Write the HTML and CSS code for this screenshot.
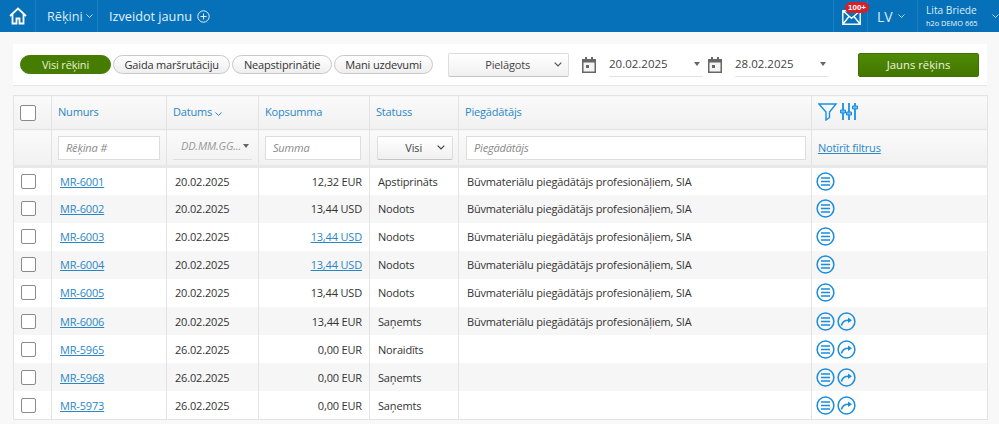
FILE: index.html
```html
<!DOCTYPE html>
<html lang="lv">
    <head>
        <meta charset="UTF-8">
        <title>Rēķini</title>
        <link rel="stylesheet" href="styles.css">
    </head>
    <body>
        <svg class="defs" width="0" height="0">
            <symbol id="i-list" viewBox="0 0 19 19">
                <circle cx="9.5" cy="9.5" r="8.4" fill="none" stroke="currentColor" stroke-width="1.5"/>
                <path d="M5 6h9M5 9.5h9M5 13h9" fill="none" stroke="currentColor" stroke-width="1.6"/>
            </symbol>
            <symbol id="i-fwd" viewBox="0 0 19 19">
                <circle cx="9.5" cy="9.5" r="8.4" fill="none" stroke="currentColor" stroke-width="1.5"/>
                <path d="M4.5 13.5c.6-3.2 3-5.300 7-5.300" fill="none" stroke="currentColor" stroke-width="1.5"/>
                <path d="M11 5.400l4 2.800-4 2.800z" fill="currentColor"/>
            </symbol>
            <symbol id="i-cal" viewBox="0 0 14 16">
                <path d="M3 0h2v2h4V0h2v2h3v14H0V2h3z" fill="#666"/>
                <path d="M1.500 5.500h11v9h-11z" fill="#f4f4f4"/>
                <path d="M4 8h3v3H4z" fill="#666"/>
            </symbol>
        </svg>

        <div class="topbar">
            <a class="home">
                <svg width="18" height="18" viewBox="0 0 18 18"><path d="M1 9l8-7.500L17 9M3.500 7.500V16.500h4v-5h3v5h4V7.500" fill="none" stroke="#fff" stroke-width="1.800"/></svg>
            </a>
            <a class="menu">Rēķini <svg class="chev" width="7" height="4" viewBox="0 0 7 4"><path d="M.5.500l3 3 3-3" fill="none" stroke="#bfdcf0"/></svg></a>
            <a class="create">Izveidot jaunu
                <svg width="13" height="13" viewBox="0 0 13 13"><circle cx="6.500" cy="6.500" r="5.700" fill="none" stroke="#e4f1fa"/><path d="M3.500 6.500h6M6.500 3.500v6" stroke="#e4f1fa"/></svg>
            </a>
            <div class="spacer"></div>
            <a class="mail">
                <svg width="19" height="15" viewBox="0 0 19 15"><path d="M.8.800h17.400v13.400H.8zM.8.800l8.700 7.500 8.700-7.500M.8 14.200l6-7.500M18.200 14.200l-6-7.500" fill="none" stroke="#fff" stroke-width="1.400"/></svg>
                <span class="badge">100+</span>
            </a>
            <a class="lang">LV <svg class="chev" width="7" height="4" viewBox="0 0 7 4"><path d="M.5.500l3 3 3-3" fill="none" stroke="#bfdcf0"/></svg></a>
            <a class="user">
                <span class="user-name">Lita Briede</span>
                <span class="user-org">h2o DEMO 665</span>
            </a>
            <svg class="chev user-chev" width="7" height="4" viewBox="0 0 7 4"><path d="M.5.500l3 3 3-3" fill="none" stroke="#bfdcf0"/></svg>
        </div>

        <div class="toolbar">
            <div class="pills">
                <button class="pill on">Visi rēķini</button>
                <button class="pill">Gaida maršrutāciju</button>
                <button class="pill">Neapstiprinātie</button>
                <button class="pill">Mani uzdevumi</button>
            </div>
            <div class="select period">Pielāgots <svg width="8" height="5" viewBox="0 0 8 5"><path d="M.7.700L4 4 7.300.7" fill="none" stroke="#555" stroke-width="1.200"/></svg></div>
            <svg class="cal" width="14" height="16"><use href="#i-cal"/></svg>
            <div class="date">20.02.2025<i class="caret"></i></div>
            <svg class="cal cal2" width="14" height="16"><use href="#i-cal"/></svg>
            <div class="date">28.02.2025<i class="caret"></i></div>
            <button class="new-btn">Jauns rēķins</button>
        </div>

        <table class="grid">
            <colgroup>
                <col class="c-check"><col class="c-num"><col class="c-date"><col class="c-sum"><col class="c-status"><col class="c-supplier"><col class="c-act">
            </colgroup>
            <thead>
                <tr class="head">
                    <th><span class="box big"></span></th>
                    <th>Numurs</th>
                    <th>Datums <svg width="7" height="4" viewBox="0 0 7 4"><path d="M.5.500l3 3 3-3" fill="none" stroke="#2b86c5"/></svg></th>
                    <th>Kopsumma</th>
                    <th>Statuss</th>
                    <th>Piegādātājs</th>
                    <th class="tools">
                        <svg class="tool-filter" width="20" height="18" viewBox="0 0 20 18"><path d="M1 1h17l-6.500 8v5.500L8 17V9z" fill="none" stroke="#1a8fe0" stroke-width="1.400"/></svg><svg width="18" height="17" viewBox="0 0 18 17"><path d="M3 0v17M9 0v17M15 0v17" stroke="#1a8fe0" stroke-width="1.800"/><path d="M.5 7h5v3h-5zM6.500 9h5v3h-5zM12.500 3h5v3h-5z" fill="#6db8ea" stroke="#1a8fe0"/></svg>
                    </th>
                </tr>
                <tr class="filters">
                    <th></th>
                    <th><input class="field" placeholder="Rēķina #"></th>
                    <th><div class="date-filter">DD.MM.GG...<i class="caret"></i></div></th>
                    <th><input class="field" placeholder="Summa"></th>
                    <th><div class="select status">Visi <svg width="8" height="5" viewBox="0 0 8 5"><path d="M.7.700L4 4 7.300.7" fill="none" stroke="#444" stroke-width="1.200"/></svg></div></th>
                    <th><input class="field" placeholder="Piegādātājs"></th>
                    <th><a class="link">Notīrīt filtrus</a></th>
                </tr>
            </thead>
            <tbody>
                <tr>
                    <td><span class="box"></span></td><td><a class="link">MR-6001</a></td><td>20.02.2025</td><td class="sum">12,32 EUR</td><td>Apstiprināts</td><td>Būvmateriālu piegādātājs profesionāļiem, SIA</td>
                    <td class="acts"><svg class="act"><use href="#i-list"/></svg></td>
                </tr>
                <tr>
                    <td><span class="box"></span></td><td><a class="link">MR-6002</a></td><td>20.02.2025</td><td class="sum">13,44 USD</td><td>Nodots</td><td>Būvmateriālu piegādātājs profesionāļiem, SIA</td>
                    <td class="acts"><svg class="act"><use href="#i-list"/></svg></td>
                </tr>
                <tr>
                    <td><span class="box"></span></td><td><a class="link">MR-6003</a></td><td>20.02.2025</td><td class="sum"><a class="link">13,44 USD</a></td><td>Nodots</td><td>Būvmateriālu piegādātājs profesionāļiem, SIA</td>
                    <td class="acts"><svg class="act"><use href="#i-list"/></svg></td>
                </tr>
                <tr>
                    <td><span class="box"></span></td><td><a class="link">MR-6004</a></td><td>20.02.2025</td><td class="sum"><a class="link">13,44 USD</a></td><td>Nodots</td><td>Būvmateriālu piegādātājs profesionāļiem, SIA</td>
                    <td class="acts"><svg class="act"><use href="#i-list"/></svg></td>
                </tr>
                <tr>
                    <td><span class="box"></span></td><td><a class="link">MR-6005</a></td><td>20.02.2025</td><td class="sum">13,44 USD</td><td>Nodots</td><td>Būvmateriālu piegādātājs profesionāļiem, SIA</td>
                    <td class="acts"><svg class="act"><use href="#i-list"/></svg></td>
                </tr>
                <tr>
                    <td><span class="box"></span></td><td><a class="link">MR-6006</a></td><td>20.02.2025</td><td class="sum">13,44 EUR</td><td>Saņemts</td><td>Būvmateriālu piegādātājs profesionāļiem, SIA</td>
                    <td class="acts"><svg class="act"><use href="#i-list"/></svg><svg class="act"><use href="#i-fwd"/></svg></td>
                </tr>
                <tr>
                    <td><span class="box"></span></td><td><a class="link">MR-5965</a></td><td>26.02.2025</td><td class="sum">0,00 EUR</td><td>Noraidīts</td><td></td>
                    <td class="acts"><svg class="act"><use href="#i-list"/></svg><svg class="act"><use href="#i-fwd"/></svg></td>
                </tr>
                <tr>
                    <td><span class="box"></span></td><td><a class="link">MR-5968</a></td><td>26.02.2025</td><td class="sum">0,00 EUR</td><td>Saņemts</td><td></td>
                    <td class="acts"><svg class="act"><use href="#i-list"/></svg><svg class="act"><use href="#i-fwd"/></svg></td>
                </tr>
                <tr>
                    <td><span class="box"></span></td><td><a class="link">MR-5973</a></td><td>26.02.2025</td><td class="sum">0,00 EUR</td><td>Saņemts</td><td></td>
                    <td class="acts"><svg class="act"><use href="#i-list"/></svg><svg class="act"><use href="#i-fwd"/></svg></td>
                </tr>
            </tbody>
        </table>
    </body>
</html>
```

FILE: styles.css
```css
* { box-sizing: border-box; }
html, body { margin: 0; padding: 0; }
body {
    width: 999px;
    height: 424px;
    overflow: hidden;
    background: #f8f8f8;
    font-family: "Open Sans", "Liberation Sans", sans-serif;
    font-size: 11px;
    letter-spacing: -.17px;
    color: #333;
}
.defs { position: absolute; }

/* top bar */
.topbar {
    display: flex;
    align-items: center;
    height: 32px;
    background: #0671b8;
    color: #d9ebf7;
    letter-spacing: 0;
}
.home {
    display: flex;
    align-items: center;
    justify-content: center;
    width: 36px;
    height: 32px;
    border-right: 1px solid #1a7fc2;
}
.menu {
    display: flex;
    align-items: center;
    gap: 3px;
    width: 62px;
    height: 32px;
    padding-left: 11px;
    font-size: 12.700px;
    border-right: 1px solid #1a7fc2;
}
.create {
    display: flex;
    align-items: center;
    gap: 5px;
    padding-left: 11px;
    font-size: 12.700px;
    color: #e4f1fa;
}
.spacer { flex: 1; }
.mail {
    position: relative;
    display: flex;
    align-items: center;
    width: 35px;
    height: 32px;
    padding: 2px 0 0 8px;
    border-left: 1px solid #1a7fc2;
    border-right: 1px solid #1a7fc2;
}
.badge {
    position: absolute;
    top: 2px;
    left: 11px;
    padding: 0 3px;
    height: 11px;
    line-height: 11px;
    border-radius: 6px;
    background: #d3202a;
    color: #fff;
    font-family: "Liberation Sans", sans-serif;
    font-size: 8px;
    font-weight: bold;
}
.lang {
    display: flex;
    align-items: center;
    gap: 5px;
    width: 50px;
    height: 32px;
    padding-left: 9px;
    font-size: 14px;
    border-right: 1px solid #1a7fc2;
}
.user {
    display: flex;
    flex-direction: column;
    width: 74px;
    padding-left: 8px;
}
.user-name { font-size: 10.200px; line-height: 15px; }
.user-org { font-size: 7.400px; line-height: 11px; color: #eef6fb; white-space: nowrap; }
.chev { flex-shrink: 0; }

/* toolbar */
.toolbar {
    display: flex;
    align-items: center;
    width: 974px;
    height: 42px;
    margin: 12px 0 9px 13px;
    padding: 0 8px 0 7px;
    background: #fff;
    border-bottom: 1px solid #e6e6e6;
}
.pills { display: flex; gap: 2px; width: 428px; }
.pill {
    height: 19px;
    padding: 0 10.500px;
    border: 1px solid #c9c9c9;
    border-radius: 10px;
    background: linear-gradient(#fff, #eee);
    color: #333;
    font-family: inherit;
    font-size: 11px;
    letter-spacing: -.17px;
    line-height: 17px;
    white-space: nowrap;
}
.pill.on {
    width: 91px;
    background: #467c00;
    border-color: #467c00;
    color: #e8f2d8;
}
.select {
    display: flex;
    align-items: center;
    background: linear-gradient(#fff, #f0f0f0);
    border: 1px solid #ddd;
    border-bottom-color: #c4c4c4;
    border-radius: 2px;
    color: #444;
}
.period {
    justify-content: flex-end;
    gap: 24px;
    width: 121px;
    height: 24px;
    padding-right: 6px;
}
.cal { margin-left: 13px; flex-shrink: 0; }
.date {
    position: relative;
    width: 94px;
    height: 24px;
    margin-left: 13px;
    line-height: 22px;
    font-size: 11.500px;
    letter-spacing: 0;
    color: #444;
    border-bottom: 1px solid #e4e4e4;
}
.date + .cal { margin-left: 5px; }
.caret {
    position: absolute;
    right: 0;
    top: 9px;
    width: 0;
    height: 0;
    border: 3.500px solid transparent;
    border-top: 4px solid #666;
    border-bottom: 0;
}
.date .caret { right: 3px; }
.new-btn {
    width: 121px;
    height: 24px;
    margin-left: auto;
    border: 1px solid #3f7000;
    border-radius: 2px;
    background: linear-gradient(#4f8a06, #437600);
    color: #eef5e0;
    font-family: inherit;
    font-size: 11.300px;
}

/* table */
.grid {
    width: 974px;
    margin-left: 13px;
    border-collapse: collapse;
    table-layout: fixed;
    background: #fff;
}
.c-check { width: 38px; }
.c-num { width: 115px; }
.c-date { width: 92px; }
.c-sum { width: 111px; }
.c-status { width: 89px; }
.c-supplier { width: 353px; }
.c-act { width: 176px; }
.grid th, .grid td { padding: 0 6px; border: 1px solid #e3e3e3; text-align: left; }
.grid thead th { background: linear-gradient(#fafafa, #f1f1f1); font-weight: 400; }
.head th { height: 34px; padding-bottom: 2px; color: #2b86c5; }
.filters th { height: 37px; border-bottom: 3px solid #e8e8e8; }
.filters th:nth-child(4) { padding-right: 8px; }
.filters th:nth-child(5) { padding: 0 5px 0 7px; }
.filters th:nth-child(6) { padding: 0 5px 0 7px; }
.grid tbody td { height: 28.100px; border-top: 0; border-bottom: 0; color: #333; white-space: nowrap; }
.grid tbody td:nth-child(2) { padding-left: 8px; }
.grid tbody td:nth-child(3) { padding-left: 8px; }
.grid tbody td:nth-child(5) { padding-left: 8px; }
.grid tbody td:nth-child(6) { padding-left: 8px; }
.grid tbody tr:nth-child(even) td { background: #f6f6f6; }
.grid tbody tr:last-child td { border-bottom: 1px solid #e3e3e3; }
.grid td:first-child, .grid th:first-child { padding: 0 0 0 7px; }
.grid td.sum { padding-right: 7px; text-align: right; }
.box {
    display: block;
    width: 15px;
    height: 15px;
    border: 1.500px solid #8a8a8a;
    border-radius: 2px;
    background: #fff;
}
.box.big { width: 16px; height: 16px; margin-left: -1px; }
.link { color: #2b86c5; text-decoration: underline; }
.field {
    display: block;
    width: 100%;
    height: 24px;
    padding: 0 7px;
    border: 1px solid #ddd;
    background: #fff;
    font-family: inherit;
    font-size: 11px;
    letter-spacing: -.17px;
    font-style: italic;
}
.field::placeholder { color: #888; }
.date-filter {
    position: relative;
    height: 24px;
    padding-left: 8px;
    line-height: 20px;
    font-style: italic;
    color: #999;
    border-bottom: 1px solid #ddd;
    white-space: nowrap;
    overflow: hidden;
}
.date-filter .caret { right: 3px; top: 8px; }
.status {
    justify-content: flex-end;
    gap: 15px;
    height: 24px;
    padding-right: 7px;
}
.tools svg { vertical-align: middle; }
.tool-filter { margin-right: 2px; }
.acts { padding: 0 0 0 4px !important; }
.act {
    width: 19px;
    height: 19px;
    margin-right: 2px;
    color: #1b8ddd;
    vertical-align: middle;
}
```
